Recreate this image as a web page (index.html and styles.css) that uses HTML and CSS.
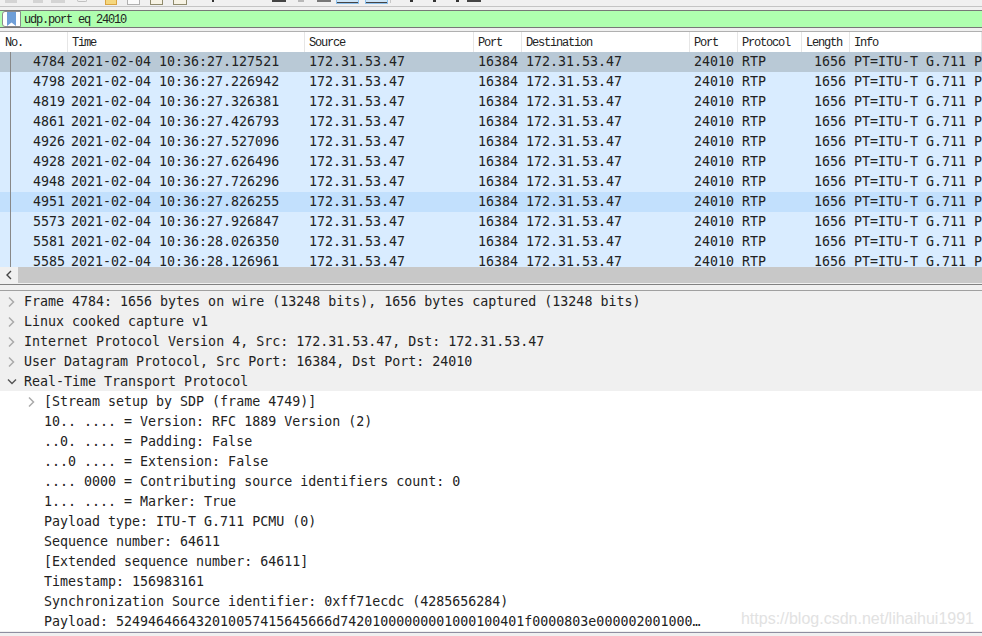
FILE: index.html
```html
<!DOCTYPE html>
<html lang="en">

<head>
    <meta charset="UTF-8" />
    <title>Wireshark</title>
    <link rel="stylesheet" href="styles.css">
</head>

<body>

    <div class="toolbar">
        <span class="tool tool-grey t1"></span>
        <span class="tool tool-grey t2"></span>
        <span class="tool tool-grey t3"></span>
        <span class="tool tool-circle t4"></span>
        <span class="tool tool-yellow t5"></span>
        <span class="tool tool-white t6"></span>
        <span class="tool tool-olive t7"></span>
        <span class="tool tool-olive t8"></span>
        <span class="tool tool-tick t9"></span>
        <span class="tool tool-dark t10"></span>
        <span class="tool tool-faint t11"></span>
        <span class="tool tool-under t12"></span>
        <span class="tool tool-on t13"></span>
        <span class="tool tool-on t14"></span>
        <span class="sep"></span>
        <span class="tool tool-tick t15"></span>
        <span class="tool tool-tick t16"></span>
        <span class="tool tool-tick t17"></span>
        <span class="tool tool-dark t18"></span>
    </div>

    <div class="filter-bar">
        <span class="bookmark">
            <svg width="9" height="14" viewBox="0 0 9 14"><path d="M0 0h9v14L4.500 10.500 0 14z" fill="#6f9fd8"/></svg>
        </span>
        <span class="filter-text">udp.port eq 24010</span>
    </div>

    <div class="packet-pane">
        <div class="packet-head">
            <div class="col-no">No.</div>
            <div class="col-time">Time</div>
            <div class="col-src">Source</div>
            <div class="col-sport">Port</div>
            <div class="col-dst">Destination</div>
            <div class="col-dport">Port</div>
            <div class="col-proto">Protocol</div>
            <div class="col-len">Length</div>
            <div class="col-info">Info</div>
        </div>
        <div class="packet-rows" id="rows"></div>
        <div class="hscroll">
            <span class="hscroll-btn">
                <svg width="8" height="10" viewBox="0 0 8 10"><path d="M6 1L2 5l4 4" fill="none" stroke="#444" stroke-width="1.400"/></svg>
            </span>
        </div>
    </div>

    <div class="detail-pane" id="details"></div>
    <div class="watermark">https://blog.csdn.net/lihaihui1991</div>

    <script>
        const packets = [
            ['4784', '27.127521'], ['4798', '27.226942'], ['4819', '27.326381'],
            ['4861', '27.426793'], ['4926', '27.527096'], ['4928', '27.626496'],
            ['4948', '27.726296'], ['4951', '27.826255'], ['5573', '27.926847'],
            ['5581', '28.026350'], ['5585', '28.126961']
        ];

        document.getElementById('rows').innerHTML = packets.map((p, i) => {
            let cls = 'packet-row';
            if (i === 0) cls += ' row-selected';
            if (i === 7) cls += ' row-related';
            return `
          <div class="${cls}">
            <div class="col-no num">${p[0]}</div>
            <div class="col-time">2021-02-04 10:36:${p[1]}</div>
            <div class="col-src">172.31.53.47</div>
            <div class="col-sport num">16384</div>
            <div class="col-dst">172.31.53.47</div>
            <div class="col-dport">24010</div>
            <div class="col-proto">RTP</div>
            <div class="col-len num">1656</div>
            <div class="col-info">PT=ITU-T G.711 PCMU</div>
          </div>`;
        }).join('');

        const open = '<svg width="10" height="8" viewBox="0 0 10 8"><path d="M1 1.500l4 4 4-4" fill="none" stroke="#555" stroke-width="1.400"/></svg>';
        const closed = '<svg width="8" height="12" viewBox="0 0 8 12"><path d="M2 1.500L6.500 6 2 10.500" fill="none" stroke="#aaa" stroke-width="1.500"/></svg>';

        const details = [
            [0, closed, 'Frame 4784: 1656 bytes on wire (13248 bits), 1656 bytes captured (13248 bits)'],
            [0, closed, 'Linux cooked capture v1'],
            [0, closed, 'Internet Protocol Version 4, Src: 172.31.53.47, Dst: 172.31.53.47'],
            [0, closed, 'User Datagram Protocol, Src Port: 16384, Dst Port: 24010'],
            [0, open, 'Real-Time Transport Protocol'],
            [1, closed, '[Stream setup by SDP (frame 4749)]'],
            [1, '', '10.. .... = Version: RFC 1889 Version (2)'],
            [1, '', '..0. .... = Padding: False'],
            [1, '', '...0 .... = Extension: False'],
            [1, '', '.... 0000 = Contributing source identifiers count: 0'],
            [1, '', '1... .... = Marker: True'],
            [1, '', 'Payload type: ITU-T G.711 PCMU (0)'],
            [1, '', 'Sequence number: 64611'],
            [1, '', '[Extended sequence number: 64611]'],
            [1, '', 'Timestamp: 156983161'],
            [1, '', 'Synchronization Source identifier: 0xff71ecdc (4285656284)'],
            [1, '', 'Payload: 524946466432010057415645666d74201000000001000100401f0000803e000002001000…']
        ];

        document.getElementById('details').innerHTML = details.map(d => `
          <div class="detail-row ${d[0] === 0 ? 'detail-top' : 'detail-sub'}">
            <span class="arrow">${d[1]}</span><span>${d[2]}</span>
          </div>`).join('');
    </script>

</body>

</html>
```

FILE: styles.css
```css
html,
body {
    margin: 0;
    padding: 0;
    height: 636px;
    overflow: hidden;
}

body {
    position: relative;
    background: #f0f0f0;
    font-family: "DejaVu Sans Mono", monospace;
    font-size: 13.3px;
    color: #222;
}

/* only the bottom edge of the toolbar icons is in the shot */
.toolbar {
    height: 6px;
    background: #f0f0f0;
    border-bottom: 1px solid #c4c4c4;
    display: flex;
    align-items: flex-start;
    overflow: hidden;
}

.tool {
    flex: none;
    box-sizing: border-box;
    height: 3px;
}

.t1 { width: 12px; margin-left: 5px; }
.t2 { width: 10px; margin-left: 16px; }
.t3 { width: 14px; margin-left: 8px; }
.t4 { width: 10px; margin-left: 12px; }
.t5 { width: 12px; margin-left: 18px; }
.t6 { width: 13px; margin-left: 10px; }
.t7 { width: 13px; margin-left: 10px; }
.t8 { width: 14px; margin-left: 10px; }
.t9 { width: 2px; margin-left: 25px; }
.t10 { width: 14px; margin-left: 58px; }
.t11 { width: 6px; margin-left: 12px; }
.t12 { width: 14px; margin-left: 13px; }
.t13 { width: 23px; margin-left: 5px; }
.t14 { width: 23px; margin-left: 6px; }
.t15 { width: 3px; margin-left: 19px; }
.t16 { width: 3px; margin-left: 20px; }
.t17 { width: 3px; margin-left: 20px; }
.t18 { width: 14px; margin-left: 8px; }

.tool-grey {
    background: #d4d4d4;
}

.tool-circle {
    height: 2px;
    border: 1px solid #c0c0c0;
    border-top: none;
    border-radius: 0 0 5px 5px;
}

.tool-yellow {
    height: 5px;
    background: #f5d77e;
    border-bottom: 1px solid #d9a441;
    border-left: 1px solid #d9a441;
    border-right: 1px solid #d9a441;
}

.tool-white {
    height: 5px;
    background: #fbfbfb;
    border: 1px solid #b0b0b0;
    border-top: none;
}

.tool-olive {
    height: 5px;
    background: #f7f3e4;
    border: 1px solid #8f8a6c;
    border-top: none;
}

.tool-tick {
    height: 2px;
    background: #333;
}

.tool-dark {
    height: 2px;
    background: #444;
}

.tool-faint {
    height: 2px;
    background: #b8b8b8;
}

.tool-under {
    height: 2px;
    background: #777;
}

.tool-on {
    height: 4px;
    background: #cce4f7;
    border: 1px solid #8cc0ec;
    border-top: none;
    box-shadow: inset 0 -1px 0 #444;
}

.sep {
    flex: none;
    width: 1px;
    height: 3px;
    margin-left: 2px;
    background: #c8c8c8;
}

.filter-bar {
    height: 16px;
    margin-top: 3px;
    background: #afffaf;
    border-top: 1px solid #777;
    border-bottom: 1px solid #777;
    display: flex;
    align-items: center;
    padding-left: 2px;
}

.bookmark {
    width: 19px;
    height: 16px;
    background: #fff;
    border: 1px solid #8a8a8a;
    border-radius: 3px 0 0 3px;
    box-sizing: border-box;
    display: flex;
    align-items: center;
    justify-content: center;
    margin-right: 3px;
}

.filter-text {
    font-family: "Liberation Mono", monospace;
    font-size: 12px;
    letter-spacing: -1.200px;
    padding-top: 2px;
}

.packet-pane {
    margin-top: 3px;
    border-top: 1px solid #b0b0b0;
    border-bottom: 1px solid #808080;
}

.packet-head {
    display: flex;
    height: 20px;
    font-family: "Liberation Mono", monospace;
    font-size: 12px;
    letter-spacing: -1.200px;
    line-height: 23px;
    background: #fff;
}

.packet-head > div {
    border-right: 1px solid #e6e6e6;
    box-sizing: border-box;
}

.packet-head .col-no {
    width: 68px;
    padding-left: 5px;
}

.packet-head .col-time {
    width: 237px;
}

.packet-rows {
    height: 215px;
    overflow: hidden;
}

.packet-row {
    display: flex;
    height: 20px;
    line-height: 20px;
    background: #d9ecff;
    white-space: nowrap;
    overflow: hidden;
}

.row-selected {
    background: #b9c9d6;
}

.row-related {
    background: #c2e0fd;
}

.col-no,
.col-time,
.col-src,
.col-sport,
.col-dst,
.col-dport,
.col-proto,
.col-len,
.col-info {
    padding: 0 4px;
    box-sizing: border-box;
    flex: none;
    overflow: hidden;
}

.col-no { width: 67px; }
.col-time { width: 238px; }
.col-src { width: 169px; }
.col-sport { width: 48px; }
.col-dst { width: 168px; }
.col-dport { width: 48px; }
.col-proto { width: 64px; }
.col-len { width: 48px; }
.col-info { flex: 1; }

.num {
    text-align: right;
}

/* the thread line of the conversation */
.packet-row .col-no {
    padding-right: 2px;
    background: linear-gradient(#888, #888) 10px 0 / 1px 100% no-repeat;
}

.packet-row .col-info {
    flex: none;
    width: 200px;
}

.hscroll {
    height: 16px;
    background: #c8c8c8;
    border-bottom: 1px solid #f0f0f0;
}

.hscroll-btn {
    display: flex;
    align-items: center;
    justify-content: center;
    width: 18px;
    height: 16px;
    background: #f0f0f0;
}

.detail-pane {
    padding-top: 5px;
    background: #f0f0f0;
}

.detail-pane::before {
    content: "";
    display: block;
    height: 1px;
    background: #a0a0a0;
}

.detail-pane::after {
    content: "";
    display: block;
    height: 1px;
    margin-top: 1px;
    background: #8e8ea0;
}

.detail-row {
    height: 20px;
    line-height: 22px;
    white-space: nowrap;
    display: flex;
}

.detail-top {
    background: #f0f0f0;
    padding-left: 7px;
}

.detail-sub {
    background: #fff;
    padding-left: 27px;
}

.arrow {
    width: 17px;
    flex: none;
    display: flex;
    align-items: center;
    padding-top: 1px;
    box-sizing: border-box;
}

.watermark {
    position: absolute;
    right: 8px;
    top: 610px;
    font-family: "Liberation Sans", sans-serif;
    font-size: 16px;
    color: #e2e2e2;
}
```
